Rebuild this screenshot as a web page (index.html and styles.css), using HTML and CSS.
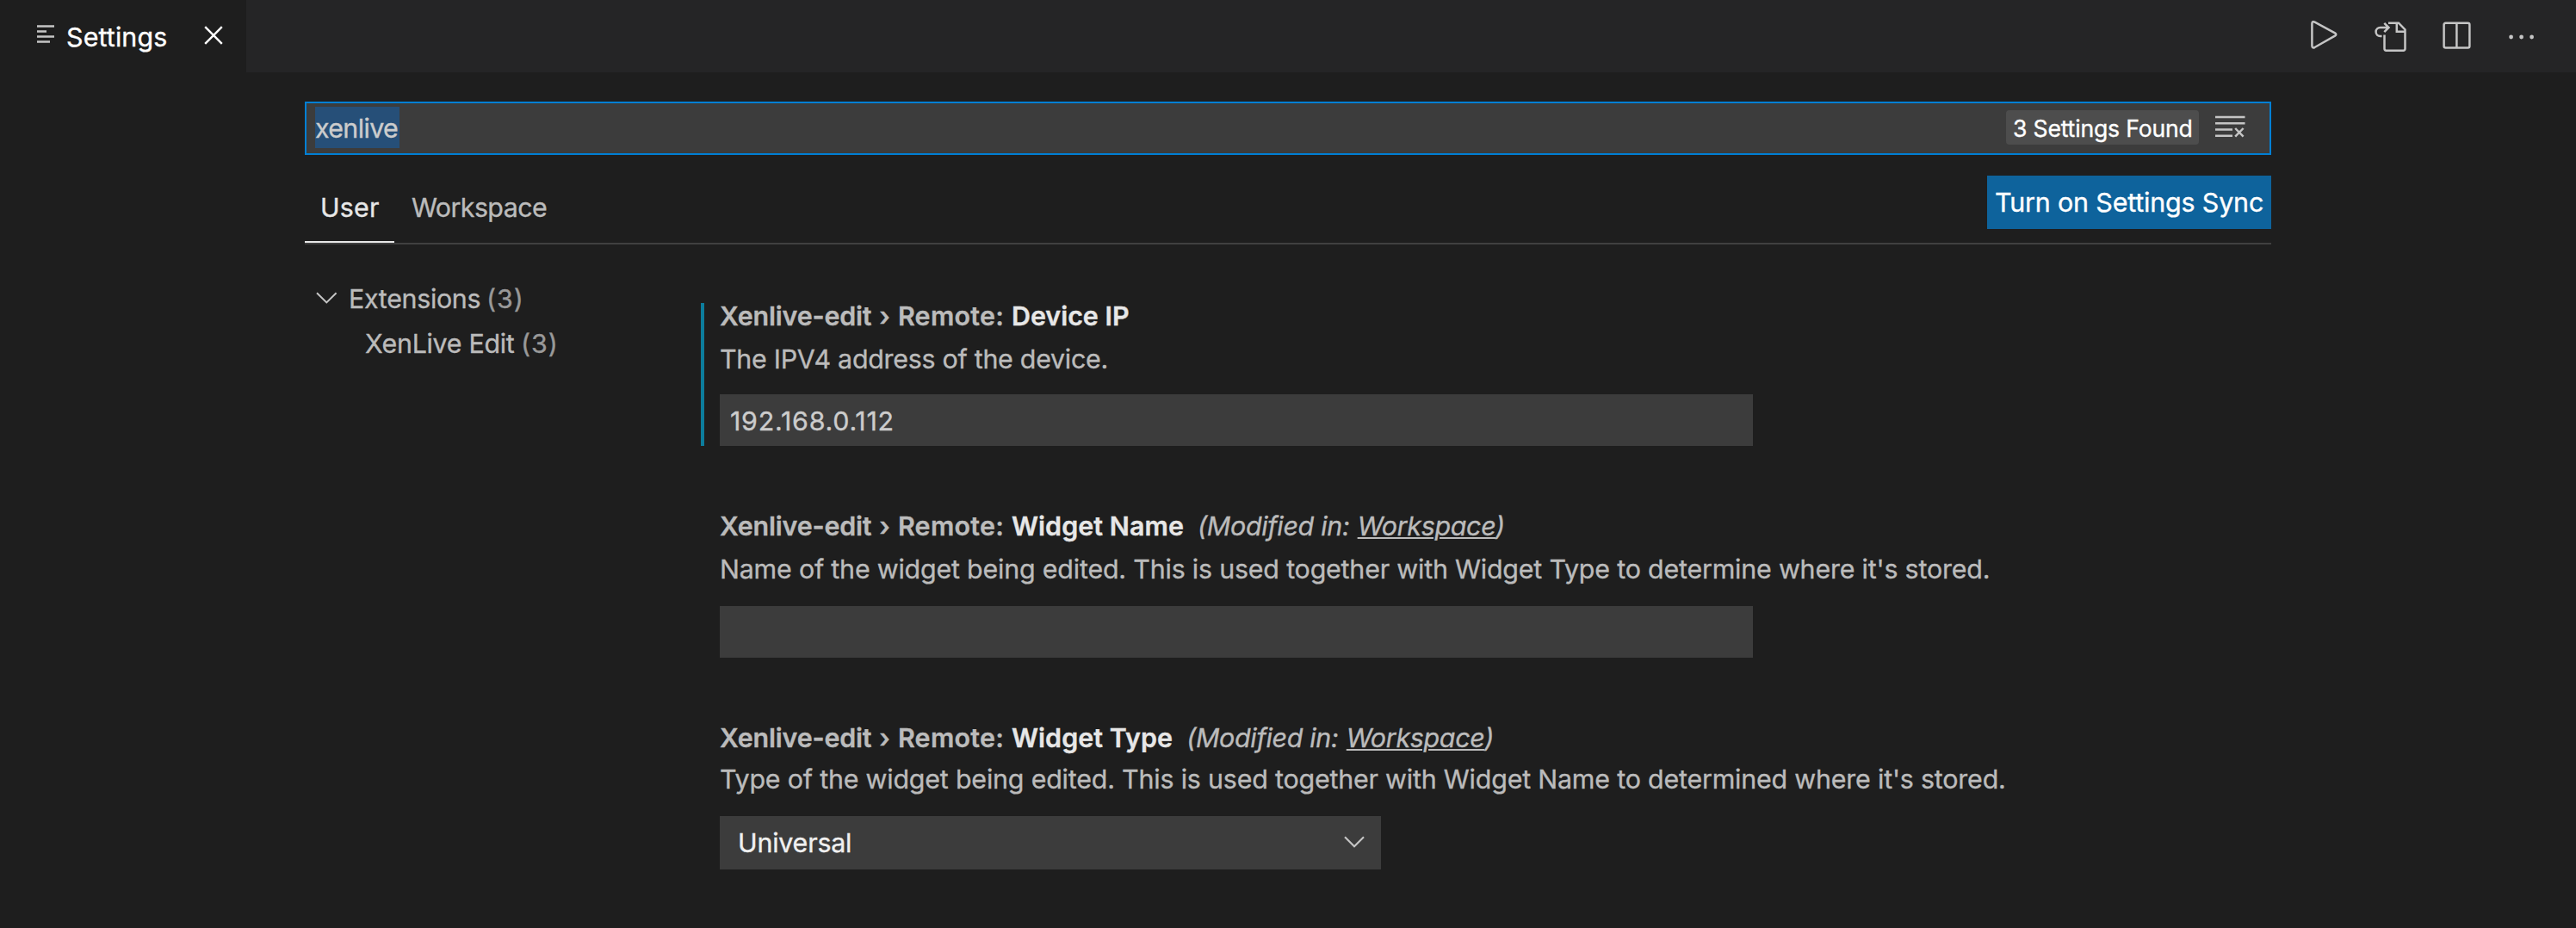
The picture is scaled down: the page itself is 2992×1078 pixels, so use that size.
FILE: index.html
```
<!DOCTYPE html>
<html lang="en">
<head>
<meta charset="utf-8">
<title>Settings</title>
<link rel="stylesheet" href="styles.css">
</head>
<body>
<header class="tabbar">
  <div class="tab">
    <svg class="tab-icon" width="20" height="22" viewBox="0 0 20 22"><path d="M0 1.6H20M0 7.6H11M0 13.6H20M0 19.6H15"/></svg>
    <span class="tab-title">Settings</span>
    <svg class="tab-close" width="22" height="22" viewBox="0 0 22 22"><path d="M1.2 1.2L20.8 20.8M20.8 1.2L1.2 20.8"/></svg>
  </div>
  <div class="actions">
    <svg width="33" height="34" viewBox="0 0 33 34"><path d="M1.4 3.6Q1.4 .2 4.5 1.7L28 14.4Q30.6 16 28 17.7L4.5 31Q1.4 32.4 1.4 29Z"/></svg>
    <svg width="39" height="38" viewBox="0 0 39 38"><path d="M12.5 16.5V32.6Q12.5 34.7 14.6 34.7H34.4Q36.5 34.7 36.5 32.6V10.5L29 2.7H17M26.8 3V12.7H36M9.5 18H7.6A5 5 0 0 1 7.6 8H16.5M12.3 2.8L17.5 8L12.3 13.2"/></svg>
    <svg width="37" height="34" viewBox="0 0 37 34"><path d="M4.6 2.8H30.4Q32.4 2.8 32.4 4.8V29.5Q32.4 31.5 30.4 31.5H4.6Q2.6 31.5 2.6 29.5V4.8Q2.6 2.8 4.6 2.8ZM17.4 2.8V31.5"/></svg>
    <svg class="dots" width="31" height="8" viewBox="0 0 31 8"><circle cx="3.6" cy="4" r="2.4"/><circle cx="15.6" cy="4" r="2.4"/><circle cx="27.6" cy="4" r="2.4"/></svg>
  </div>
</header>
<main class="editor">
  <div class="search">
    <span class="query">xenlive</span>
    <span class="badge">3 Settings Found</span>
    <svg class="clear" width="35" height="26" viewBox="0 0 35 26"><path d="M0 2H34.5M0 9.2H34.5M0 16.6H20M0 23.7H20M23.2 15L32.6 24.6M32.6 15L23.2 24.6"/></svg>
  </div>
  <nav class="scopes">
    <span class="scope scope-user">User</span>
    <span class="scope scope-workspace">Workspace</span>
    <button class="sync">Turn on Settings Sync</button>
  </nav>
  <div class="body">
    <aside class="tree">
      <div class="tree-row"><svg class="twistie" width="25" height="14" viewBox="0 0 25 14"><path d="M1 1.2L12.3 12.4L23.6 1.2"/></svg><span class="tree-ext">Extensions</span><span class="count">(3)</span></div>
      <div class="tree-row tree-child"><span class="tree-name">XenLive Edit</span><span class="count">(3)</span></div>
    </aside>
    <section class="list">
      <article class="item modified">
        <h2 class="title"><span class="category"><span class="ext">Xenlive-edit</span> › <span class="group">Remote:</span></span><span class="label">Device IP</span></h2>
        <p class="desc">The IPV4 address of the device.</p>
        <div class="field"><span class="ip">192.168.0.112</span></div>
      </article>
      <article class="item">
        <h2 class="title"><span class="category"><span class="ext">Xenlive-edit</span> › <span class="group">Remote:</span></span><span class="label wide">Widget Name</span><em class="scope-note">(Modified in: <a class="link">Workspace</a>)</em></h2>
        <p class="desc">Name of the widget being edited. This is used together with Widget Type to determine where it's stored.</p>
        <div class="field"></div>
      </article>
      <article class="item item-select">
        <h2 class="title"><span class="category"><span class="ext">Xenlive-edit</span> › <span class="group">Remote:</span></span><span class="label wide">Widget Type</span><em class="scope-note">(Modified in: <a class="link">Workspace</a>)</em></h2>
        <p class="desc">Type of the widget being edited. This is used together with Widget Name to determined where it's stored.</p>
        <div class="select"><span>Universal</span><svg width="24" height="14" viewBox="0 0 24 14"><path d="M1 1.2L12 12.2L23 1.2"/></svg></div>
      </article>
    </section>
  </div>
</main>
</body>
</html>
```
FILE: styles.css
```
* { box-sizing: border-box; }
body {
  margin: 0;
  min-height: 1078px;
  background: #1e1e1e;
  color: #bbbbbb;
  font: 400 30.4px/36px Inter, "Liberation Sans", sans-serif;
  white-space: nowrap;
  -webkit-text-stroke: .35px currentColor;
}
svg { display: block; flex: none; fill: none; stroke: #c5c5c5; stroke-width: 2.5; }
.tabbar { display: flex; justify-content: space-between; height: 84px; background: #252526; }
.tab { display: flex; width: 286px; padding: 25px 0 0 43px; background: #1e1e1e; color: #ffffff; }
.tab-icon { margin-top: 4px; }
.tab-title { width: 160px; margin-left: 14px; letter-spacing: .13px; }
.tab-close { margin-top: 5px; stroke: #ffffff; stroke-width: 2.4; }
.actions { display: flex; gap: 40px; padding: 24px 48px 0 0; }
.actions .dots { margin-top: 15px; fill: #c5c5c5; stroke: none; }

.editor { width: 2284px; margin: 34px 0 0 354px; }
.search {
  display: flex;
  height: 62px;
  padding: 4px 28px 0 10px;
  border: 2px solid #007fd4;
  background: #3c3c3c;
  color: #cccccc;
}
.query { width: 98px; height: 48px; background: #264f78; line-height: 50px; letter-spacing: -.63px; }
.badge {
  width: 224px;
  height: 40px;
  margin: 4px 19px 0 auto;
  padding-left: 8px;
  border-radius: 4px;
  background: #4d4d4d;
  color: #ffffff;
  font-size: 26.6px;
  line-height: 42px;
  letter-spacing: -.18px;
}
.clear { margin-top: 10px; }

.scopes { display: flex; height: 104px; border-bottom: 2px solid #404040; }
.scope { padding-top: 43px; }
.scope-user { width: 104px; padding-left: 18px; border-bottom: 2px solid #e7e7e7; color: #e7e7e7; letter-spacing: .2px; }
.scope-workspace { padding-left: 20px; letter-spacing: -.58px; }
.sync {
  width: 330px;
  height: 62px;
  margin: 24px 0 0 auto;
  padding: 0 0 0 9px;
  border: 0;
  background: #0e639c;
  color: #ffffff;
  font: inherit;
  line-height: 62px;
  letter-spacing: -.15px;
  text-align: left;
}

.body { display: flex; }
.tree { width: 460px; padding-top: 37px; }
.tree-row { display: flex; height: 52px; padding-left: 13px; line-height: 52px; }
.tree-child { padding-left: 70px; }
.twistie { margin: 18px 13px 0 0; stroke-width: 2; }
.tree-ext { width: 160px; letter-spacing: -.32px; }
.tree-name { width: 181px; letter-spacing: -.3px; }
.count { color: #999999; letter-spacing: 1px; }

.list { display: flex; flex-direction: column; gap: 78px; padding-top: 68px; }
.item { padding-left: 18px; border-left: 4px solid transparent; }
.modified { border-color: #0c7d9d; }
.title { display: flex; margin: 0; font-size: inherit; font-weight: 600; line-height: 30px; }
.category { width: 339px; word-spacing: 1.3px; }
.ext { letter-spacing: -.18px; }
.group { letter-spacing: .3px; }
.label { color: #e7e7e7; }
.wide { letter-spacing: .08px; }
.scope-note { margin-left: 16px; font-weight: 400; letter-spacing: -.3px; }
.link { margin-left: 1px; text-decoration: underline; text-decoration-thickness: 2px; text-underline-offset: 2px; }
.desc { margin: 17px 0 25px; letter-spacing: -.19px; }
.modified .desc { margin-bottom: 23px; letter-spacing: -.27px; }
.item-select .desc { margin-top: 15px; }
.field { width: 1200px; height: 60px; padding-left: 12px; background: #3c3c3c; color: #cccccc; line-height: 62px; }
.ip { letter-spacing: .76px; }
.select {
  display: flex;
  justify-content: space-between;
  width: 768px;
  height: 62px;
  padding: 0 19px 0 21px;
  background: #3c3c3c;
  color: #f0f0f0;
  line-height: 62px;
  letter-spacing: -.2px;
}
.select svg { margin-top: 23px; stroke-width: 2.2; }
```
